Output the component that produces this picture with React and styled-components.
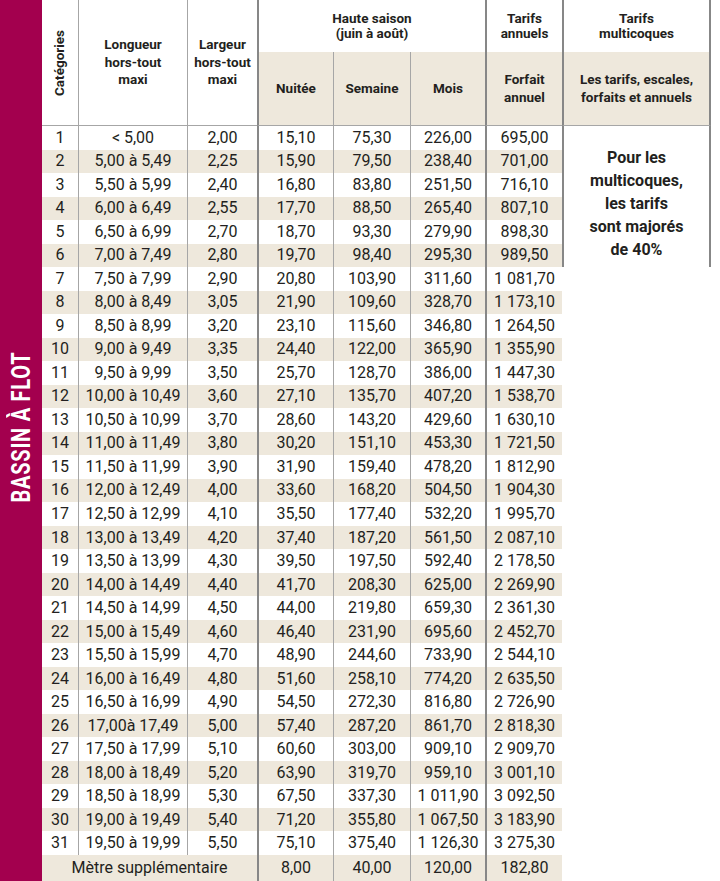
import React from 'react';
import styled, { createGlobalStyle, css } from 'styled-components';

const GlobalStyle = createGlobalStyle`
  html, body {
    margin: 0;
    padding: 0;
    background: #ffffff;
  }
  body {
    font-family: Roboto, "Liberation Sans", sans-serif;
    color: #231f20;
  }
`;

const BEIGE = '#eee8dc';

const edges = {
  thin: '1px solid #a6a6a6',
  thick: '2px solid #878787',
};

const Page = styled.div`
  display: flex;
  width: 720px;
  height: 881px;
  overflow: hidden;
`;

const Band = styled.div`
  flex: none;
  width: 42px;
  box-sizing: border-box;
  padding-bottom: 26px;
  background: #a3004e;
  display: flex;
  align-items: center;
  justify-content: center;
`;

const BandTitle = styled.span`
  writing-mode: vertical-rl;
  transform: rotate(180deg) scaleY(0.77);
  color: #ffffff;
  font-weight: 700;
  font-size: 26px;
  letter-spacing: 1px;
  line-height: 1;
  white-space: nowrap;
`;

const Table = styled.div`
  flex: none;
  display: grid;
  grid-template-columns: 36px 109px 70px 76px 77px 75px 77px 149px;
  grid-template-rows: 52px 74px repeat(31, 23.516px) 26px;
`;

const Cell = styled.div`
  box-sizing: border-box;
  display: flex;
  align-items: center;
  justify-content: center;
  text-align: center;
  white-space: nowrap;
  font-size: 16px;
  line-height: 1;
  grid-column: ${(p) => p.$col} / span ${(p) => p.$span || 1};
  grid-row: ${(p) => p.$row} / span ${(p) => p.$rows || 1};
  background: ${(p) => (p.$shade ? BEIGE : '#ffffff')};
  border-left: ${(p) => (p.$edge ? edges[p.$edge] : 'none')};
  border-right: ${(p) => (p.$end ? edges.thick : 'none')};
`;

const HeadCell = styled(Cell)`
  font-weight: 700;
  font-size: 13.5px;
  line-height: ${(p) => (p.$tight ? '15px' : '17.5px')};
  color: #231f20;
  ${(p) =>
    p.$ruled &&
    css`
      border-bottom: 1px solid #a6a6a6;
    `}
`;

const Rotated = styled.span`
  writing-mode: vertical-rl;
  transform: rotate(180deg);
  font-size: 13.5px;
  font-weight: 700;
`;

const NoteCell = styled(Cell)`
  align-items: flex-start;
  padding-top: 20px;
  font-weight: 700;
  font-size: 16px;
  line-height: 23px;
  white-space: normal;
`;

const colEdges = [null, 'thin', 'thin', 'thick', 'thin', 'thin', 'thick'];

const rows = [
  ['1', '< 5,00', '2,00', '15,10', '75,30', '226,00', '695,00'],
  ['2', '5,00 à 5,49', '2,25', '15,90', '79,50', '238,40', '701,00'],
  ['3', '5,50 à 5,99', '2,40', '16,80', '83,80', '251,50', '716,10'],
  ['4', '6,00 à 6,49', '2,55', '17,70', '88,50', '265,40', '807,10'],
  ['5', '6,50 à 6,99', '2,70', '18,70', '93,30', '279,90', '898,30'],
  ['6', '7,00 à 7,49', '2,80', '19,70', '98,40', '295,30', '989,50'],
  ['7', '7,50 à 7,99', '2,90', '20,80', '103,90', '311,60', '1 081,70'],
  ['8', '8,00 à 8,49', '3,05', '21,90', '109,60', '328,70', '1 173,10'],
  ['9', '8,50 à 8,99', '3,20', '23,10', '115,60', '346,80', '1 264,50'],
  ['10', '9,00 à 9,49', '3,35', '24,40', '122,00', '365,90', '1 355,90'],
  ['11', '9,50 à 9,99', '3,50', '25,70', '128,70', '386,00', '1 447,30'],
  ['12', '10,00 à 10,49', '3,60', '27,10', '135,70', '407,20', '1 538,70'],
  ['13', '10,50 à 10,99', '3,70', '28,60', '143,20', '429,60', '1 630,10'],
  ['14', '11,00 à 11,49', '3,80', '30,20', '151,10', '453,30', '1 721,50'],
  ['15', '11,50 à 11,99', '3,90', '31,90', '159,40', '478,20', '1 812,90'],
  ['16', '12,00 à 12,49', '4,00', '33,60', '168,20', '504,50', '1 904,30'],
  ['17', '12,50 à 12,99', '4,10', '35,50', '177,40', '532,20', '1 995,70'],
  ['18', '13,00 à 13,49', '4,20', '37,40', '187,20', '561,50', '2 087,10'],
  ['19', '13,50 à 13,99', '4,30', '39,50', '197,50', '592,40', '2 178,50'],
  ['20', '14,00 à 14,49', '4,40', '41,70', '208,30', '625,00', '2 269,90'],
  ['21', '14,50 à 14,99', '4,50', '44,00', '219,80', '659,30', '2 361,30'],
  ['22', '15,00 à 15,49', '4,60', '46,40', '231,90', '695,60', '2 452,70'],
  ['23', '15,50 à 15,99', '4,70', '48,90', '244,60', '733,90', '2 544,10'],
  ['24', '16,00 à 16,49', '4,80', '51,60', '258,10', '774,20', '2 635,50'],
  ['25', '16,50 à 16,99', '4,90', '54,50', '272,30', '816,80', '2 726,90'],
  ['26', '17,00à 17,49', '5,00', '57,40', '287,20', '861,70', '2 818,30'],
  ['27', '17,50 à 17,99', '5,10', '60,60', '303,00', '909,10', '2 909,70'],
  ['28', '18,00 à 18,49', '5,20', '63,90', '319,70', '959,10', '3 001,10'],
  ['29', '18,50 à 18,99', '5,30', '67,50', '337,30', '1 011,90', '3 092,50'],
  ['30', '19,00 à 19,49', '5,40', '71,20', '355,80', '1 067,50', '3 183,90'],
  ['31', '19,50 à 19,99', '5,50', '75,10', '375,40', '1 126,30', '3 275,30'],
];

const extra = ['8,00', '40,00', '120,00', '182,80'];
const lastRow = rows.length + 3;

export default function App() {
  return (
    <>
      <GlobalStyle />
      <Page>
        <Band>
          <BandTitle>BASSIN À FLOT</BandTitle>
        </Band>
        <Table>
          {/* en-tête */}
          <HeadCell $col={1} $row={1} $rows={2} $ruled>
            <Rotated>Catégories</Rotated>
          </HeadCell>
          <HeadCell $col={2} $row={1} $rows={2} $edge="thin" $ruled>
            Longueur
            <br />
            hors-tout
            <br />
            maxi
          </HeadCell>
          <HeadCell $col={3} $row={1} $rows={2} $edge="thin" $ruled>
            Largeur
            <br />
            hors-tout
            <br />
            maxi
          </HeadCell>
          <HeadCell $col={4} $span={3} $row={1} $edge="thick" $tight>
            Haute saison
            <br />
            (juin à août)
          </HeadCell>
          <HeadCell $col={7} $row={1} $edge="thick" $tight>
            Tarifs
            <br />
            annuels
          </HeadCell>
          <HeadCell $col={8} $row={1} $edge="thick" $end $tight>
            Tarifs
            <br />
            multicoques
          </HeadCell>
          <HeadCell $col={4} $row={2} $edge="thick" $shade $ruled>
            Nuitée
          </HeadCell>
          <HeadCell $col={5} $row={2} $edge="thin" $shade $ruled>
            Semaine
          </HeadCell>
          <HeadCell $col={6} $row={2} $edge="thin" $shade $ruled>
            Mois
          </HeadCell>
          <HeadCell $col={7} $row={2} $edge="thick" $shade $ruled>
            Forfait
            <br />
            annuel
          </HeadCell>
          <HeadCell $col={8} $row={2} $edge="thick" $end $shade $ruled>
            Les tarifs, escales,
            <br />
            forfaits et annuels
          </HeadCell>

          {/* lignes */}
          {rows.map((r, i) =>
            r.map((v, j) => (
              <Cell
                key={`${i}-${j}`}
                $col={j + 1}
                $row={i + 3}
                $edge={colEdges[j]}
                $shade={i % 2 === 1}
              >
                {v}
              </Cell>
            ))
          )}

          <NoteCell $col={8} $row={3} $rows={6} $edge="thick" $end>
            Pour les
            <br />
            multicoques,
            <br />
            les tarifs
            <br />
            sont majorés
            <br />
            de 40%
          </NoteCell>

          {/* mètre supplémentaire */}
          <Cell $col={1} $span={3} $row={lastRow} $shade>
            Mètre supplémentaire
          </Cell>
          {extra.map((v, j) => (
            <Cell key={v} $col={j + 4} $row={lastRow} $edge={colEdges[j + 3]} $shade>
              {v}
            </Cell>
          ))}
        </Table>
      </Page>
    </>
  );
}
